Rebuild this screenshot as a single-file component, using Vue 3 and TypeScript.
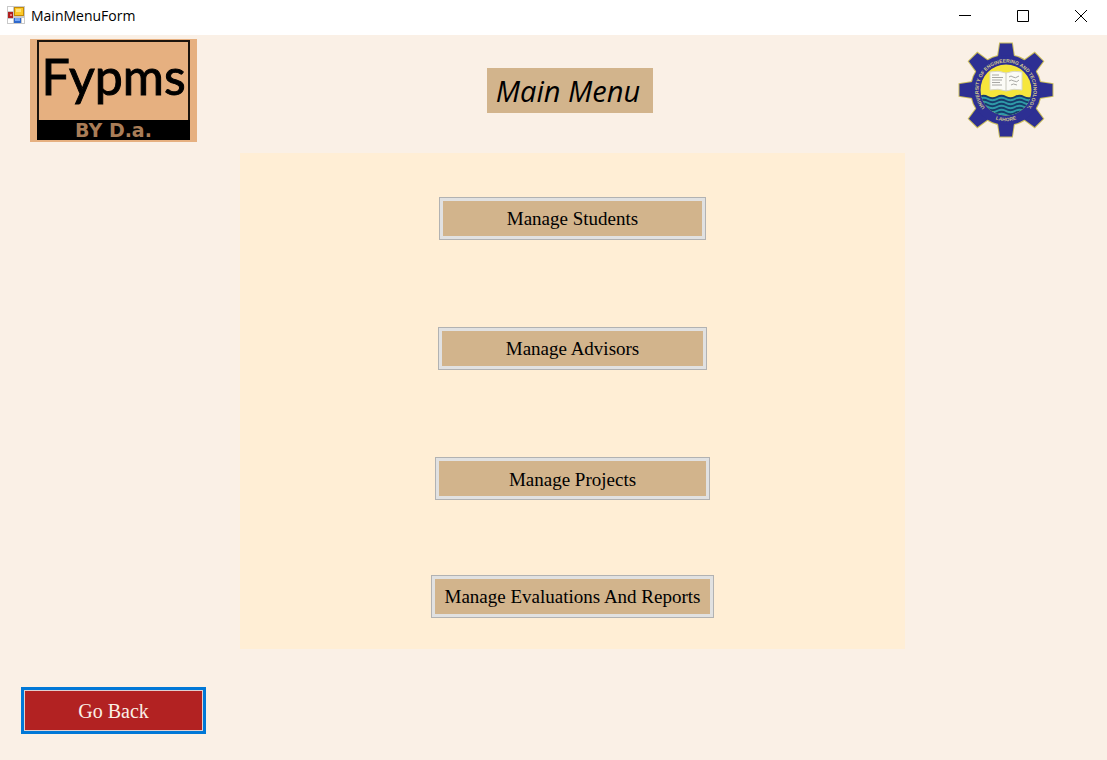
<script setup lang="ts">
interface MenuItem {
  label: string
  size: string
}

const items: MenuItem[] = [
  { label: 'Manage Students', size: 'small' },
  { label: 'Manage Advisors', size: 'medium' },
  { label: 'Manage Projects', size: 'large' },
  { label: 'Manage Evaluations And Reports', size: 'widest' },
]

const toothAngles: number[] = [0, 45, 90, 135, 180, 225, 270, 315]
const waveRows: number[] = [0, 4, 8, 12, 16]
</script>

<template>
  <div class="window">
    <header class="titlebar">
      <svg class="app-icon" viewBox="0 0 18 18" aria-hidden="true">
        <rect x="0" y="0" width="18" height="18" fill="#c9c9c9" />
        <rect x="1" y="1" width="5" height="4" fill="#fff" />
        <rect x="1" y="13" width="5" height="4" fill="#fff" />
        <rect x="15" y="12" width="2" height="5" fill="#fff" />
        <rect x="1" y="6" width="5" height="6" fill="#b01e1e" />
        <rect x="3" y="8" width="2" height="2" fill="#e98080" />
        <rect x="7" y="1" width="10" height="9" fill="#c58a06" />
        <rect x="8" y="2" width="8" height="7" fill="#fbc928" />
        <rect x="9" y="3" width="5" height="3" fill="#ffe27a" />
        <rect x="7" y="12" width="7" height="5" fill="#2e68cc" />
        <rect x="8" y="12" width="5" height="3" fill="#75a7f5" />
      </svg>
      <span class="caption">MainMenuForm</span>
      <div class="controls">
        <button type="button" aria-label="Minimize">
          <svg viewBox="0 0 12 12"><path d="M0 5.5H12" /></svg>
        </button>
        <button type="button" aria-label="Maximize">
          <svg viewBox="0 0 12 12"><path d="M.5 .5H11.5V11.5H.5Z" /></svg>
        </button>
        <button type="button" aria-label="Close">
          <svg viewBox="0 0 12 12"><path d="M0 0L12 12M12 0L0 12" /></svg>
        </button>
      </div>
    </header>

    <main class="form">
      <div class="brand">
        <div class="brand-frame">
          <div class="brand-name">Fypms</div>
          <div class="brand-by">BY D.a.</div>
        </div>
      </div>

      <div class="heading">
        <h1>Main Menu</h1>
      </div>

      <div class="crest">
        <svg viewBox="-48 -48 96 96" role="img" aria-label="University of Engineering and Technology, Lahore">
          <defs>
            <path id="ring-top" d="M-13 24.300A27.500 27.500 0 1 1 13 24.300" />
            <path id="ring-bottom" d="M-15 27.300A31 31 0 0 0 15 27.300" />
            <clipPath id="disc"><circle r="25.5" /></clipPath>
          </defs>
          <g class="gear-edge">
            <path v-for="a in toothAngles" :key="a" :transform="`rotate(${a})`" d="M-8.500 -30L-6 -46.5H6L8.500 -30Z" />
            <circle r="35" />
          </g>
          <g class="gear">
            <path v-for="a in toothAngles" :key="a" :transform="`rotate(${a})`" d="M-8.500 -30L-6 -46.5H6L8.500 -30Z" />
            <circle r="35" />
          </g>
          <circle r="25.5" fill="#f6e63c" />
          <g clip-path="url(#disc)">
            <path d="M-27 7Q-22.500 4.500 -18 7T-9 7T0 7T9 7T18 7T27 7V27H-27Z" fill="#2f9aa8" />
            <path
              v-for="y in waveRows"
              :key="y"
              class="wave"
              :transform="`translate(0 ${y})`"
              d="M-27 7Q-22.500 4.500 -18 7T-9 7T0 7T9 7T18 7T27 7"
            />
          </g>
          <path d="M-16 -18Q-8 -20 0 -17Q8 -20 16 -18V0Q8 -2 0 1Q-8 -2 -16 0Z" fill="#fbfbf6" stroke="#d8d8c8" />
          <path d="M0 -17V1" stroke="#c8c8bc" />
          <path class="ink" d="M-14 -15H-7M-14 -12.500H-3M-14 -10H-4M-14 -7.500H-6M-14 -5H-4" />
          <path class="ink" d="M3 -13Q5 -15 7 -13T13 -14M3 -9Q5 -11 8 -9T13 -10M5 -5Q7 -7 11 -5" />
          <text class="ring-text" text-anchor="middle">
            <textPath href="#ring-top" startOffset="50%">UNIVERSITY OF ENGINEERING AND TECHNOLOGY,</textPath>
          </text>
          <text class="ring-text" text-anchor="middle">
            <textPath href="#ring-bottom" startOffset="50%">LAHORE</textPath>
          </text>
        </svg>
      </div>

      <nav class="panel" aria-label="Main menu">
        <div v-for="item in items" :key="item.label" class="cell">
          <button type="button" class="menu-button" :class="item.size">{{ item.label }}</button>
        </div>
      </nav>

      <div class="back">
        <button type="button" class="back-button">Go Back</button>
      </div>
    </main>
  </div>
</template>

<style>
body {
  margin: 0;
  background: #faf0e6;
}
</style>

<style scoped>
.window {
  display: flex;
  flex-direction: column;
  min-height: 100vh;
  background: #faf0e6;
}

.titlebar {
  display: flex;
  align-items: center;
  height: 35px;
  padding-left: 7px;
  padding-bottom: 1px;
  box-sizing: border-box;
  background: #fff;
}

.app-icon {
  width: 18px;
  height: 18px;
  margin-top: -4px;
}

.caption {
  margin: -3px 0 0 6px;
  color: #000;
  font: 14px/20px "Open Sans", "Noto Sans", sans-serif;
}

.controls {
  display: flex;
  align-self: stretch;
  margin: -3px -3px 0 auto;
}

.controls button {
  display: grid;
  place-items: center;
  width: 58px;
  padding: 0;
  border: 0;
  background: none;
}

.controls svg {
  width: 12px;
  height: 12px;
  fill: none;
  stroke: #000;
}

.form {
  display: grid;
  flex: 1;
  grid-template-columns: 240fr 665fr 202fr;
  grid-template-rows: 118px 1fr 111px;
}

.brand {
  padding: 4px 0 0 30px;
}

.brand-frame {
  width: 167px;
  height: 103px;
  padding: 1px 7px 2px;
  box-sizing: border-box;
  background: #e6b080;
}

.brand-name {
  height: 80px;
  border: 2px solid #1c140d;
  border-bottom: 0;
  box-sizing: border-box;
  color: #000;
  font: 50px/68px Lato, "Open Sans", sans-serif;
  -webkit-text-stroke: 1px #000;
  text-align: center;
}

.brand-by {
  height: 20px;
  background: #000;
  color: #a97d57;
  font: bold 19px/20px "DejaVu Sans", sans-serif;
  text-align: center;
}

.heading {
  display: flex;
  align-items: center;
  justify-content: center;
  padding-bottom: 8px;
  padding-right: 5px;
}

h1 {
  width: 166px;
  margin: 0;
  padding-right: 4px;
  box-sizing: border-box;
  background: #d2b48c;
  color: #000;
  font: italic 29px/45px "Open Sans", sans-serif;
  text-align: center;
}

.crest {
  padding: 7px 0 0 53px;
}

.crest svg {
  display: block;
  width: 96px;
  height: 96px;
}

.gear-edge {
  fill: #c9bd5c;
  stroke: #c9bd5c;
  stroke-width: 2;
}

.gear {
  fill: #2d2f93;
}

.wave {
  fill: none;
  stroke: #173c6b;
  stroke-width: 2;
}

.ink {
  fill: none;
  stroke: #a8a8a4;
}

.ring-text {
  fill: #d3ca90;
  font: bold 5px "Liberation Sans", sans-serif;
}

.panel {
  display: grid;
  grid-column: 2;
  grid-row: 2;
  grid-template-rows: 130fr 130fr 130fr 105fr;
  background: #ffeed5;
}

.cell {
  display: flex;
  align-items: center;
  justify-content: center;
}

.menu-button {
  height: 43px;
  padding: 2px 0 0;
  border: 1px solid #b2b2b2;
  box-shadow: inset 0 0 0 3px #e1e1e1;
  background: #d2b48c;
  color: #000;
  font: 19px/24px "Liberation Serif", serif;
}

.small {
  width: 267px;
}

.medium {
  width: 269px;
}

.large {
  width: 275px;
}

.widest {
  width: 283px;
}

.back {
  grid-column: 1;
  grid-row: 3;
  padding: 38px 0 0 21px;
}

.back-button {
  width: 185px;
  height: 47px;
  padding: 0;
  border: 3px solid #0078d7;
  box-shadow: inset 0 0 0 1px #e1cfcf;
  background: #b22222;
  color: #faf0e6;
  font: 20px/24px "Liberation Serif", serif;
}
</style>
